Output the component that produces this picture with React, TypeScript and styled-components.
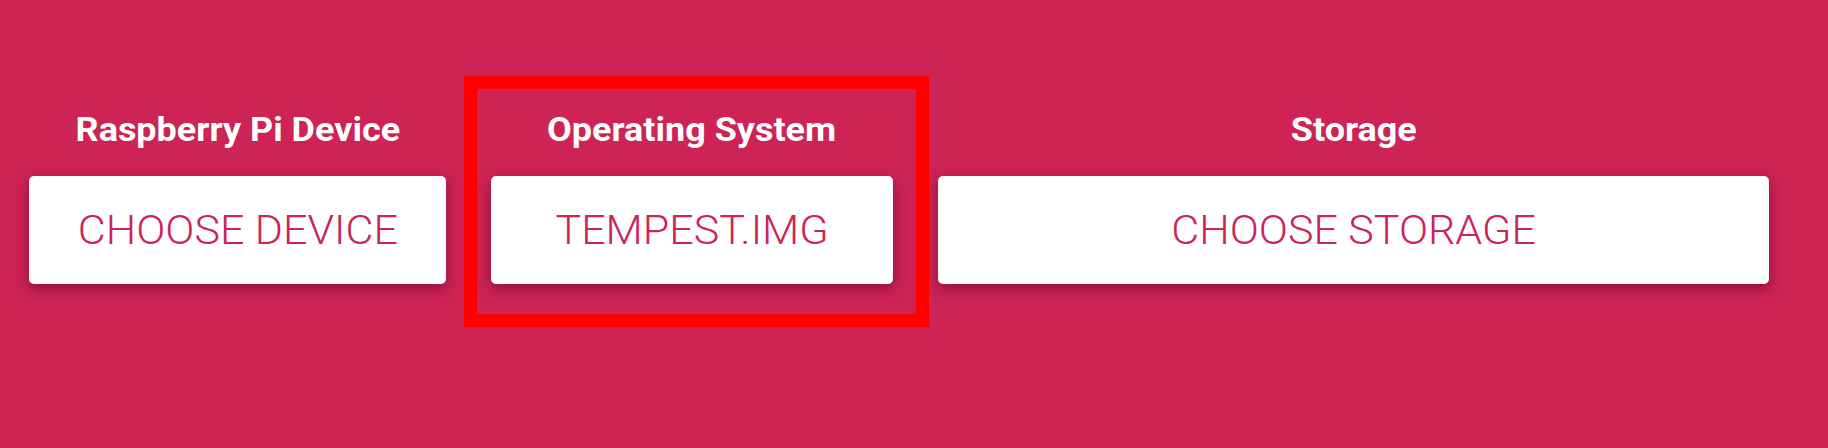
import React from "react";
import styled, { createGlobalStyle } from "styled-components";

const GlobalStyle = createGlobalStyle`
  html, body {
    margin: 0;
    padding: 0;
    background: #cd2355;
  }
  body {
    font-family: Roboto, "Noto Sans", "Liberation Sans", sans-serif;
  }
`;

const Page = styled.main`
  width: 1828px;
  height: 448px;
  box-sizing: border-box;
  background: #cd2355;
  padding: 111px 59px 0 29px;
`;

const Row = styled.div`
  display: grid;
  grid-template-columns: 417px 402px 831px;
  column-gap: 45px;
`;

const Column = styled.section<{ $highlighted?: boolean }>`
  position: relative;
  display: flex;
  flex-direction: column;
  align-items: stretch;

  ${({ $highlighted }) =>
    $highlighted &&
    `
    &::after {
      content: "";
      position: absolute;
      top: -35px;
      left: -27px;
      right: -36px;
      bottom: -43px;
      border: 13px solid #ff0000;
      pointer-events: none;
    }
  `}
`;

const Heading = styled.h2`
  margin: 0 0 27px;
  font-family: Roboto, "Noto Sans", "Liberation Sans", sans-serif;
  font-weight: 700;
  font-size: 33px;
  line-height: 38px;
  color: #ffffff;
  text-align: center;
`;

const Stretched = styled.span<{ $x: number }>`
  display: inline-block;
  transform: scaleX(${({ $x }) => $x});
  transform-origin: center;
  white-space: nowrap;
`;

const ChooseButton = styled.button`
  height: 108px;
  display: flex;
  align-items: center;
  justify-content: center;
  border: none;
  border-radius: 5px;
  background: #ffffff;
  color: #cd2355;
  font-family: Roboto, "Noto Sans", "Liberation Sans", sans-serif;
  font-weight: 300;
  font-size: 40px;
  text-transform: uppercase;
  box-shadow: 0 5px 13px rgba(90, 0, 30, 0.55);
  cursor: pointer;
  padding: 0;
`;

const columns = [
  { title: "Raspberry Pi Device", label: "CHOOSE DEVICE" },
  { title: "Operating System", label: "TEMPEST.IMG", highlighted: true },
  { title: "Storage", label: "CHOOSE STORAGE" },
];

export default function App() {
  return (
    <>
      <GlobalStyle />
      <Page>
        <Row>
          {columns.map((c) => (
            <Column key={c.title} $highlighted={c.highlighted}>
              <Heading>
                <Stretched $x={1.09}>{c.title}</Stretched>
              </Heading>
              <ChooseButton>
                <Stretched $x={1.075}>{c.label}</Stretched>
              </ChooseButton>
            </Column>
          ))}
        </Row>
      </Page>
    </>
  );
}
